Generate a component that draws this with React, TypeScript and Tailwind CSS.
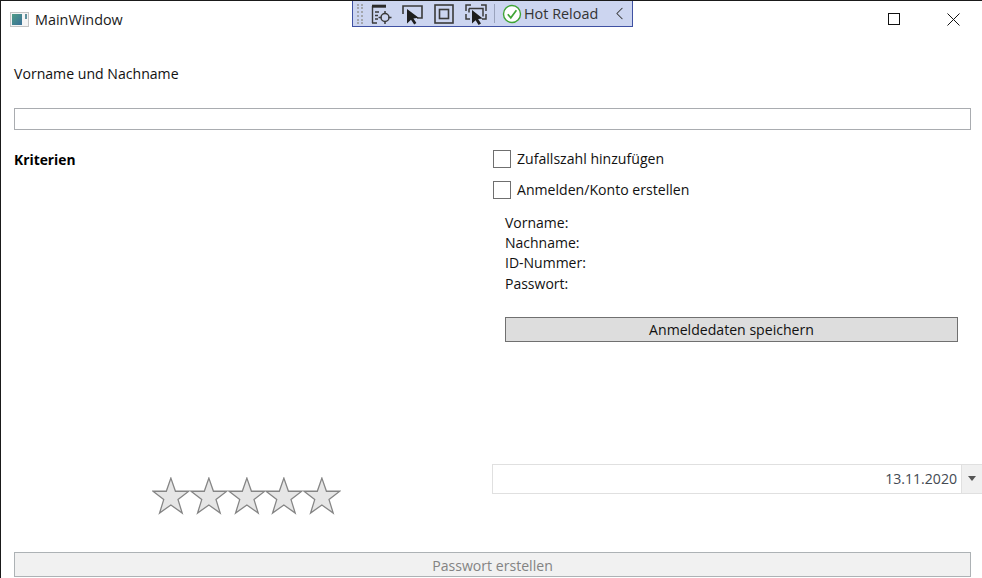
import { ChevronLeft } from "lucide-react";

function Star() {
  return (
    <svg width="37.75" height="38" viewBox="0 0 38 38" className="shrink-0">
      <polygon
        points="19,1 23.6,14.2 37,14.2 26.2,22.6 30.4,36.2 19,28 7.6,36.2 11.8,22.6 1,14.2 14.4,14.2"
        fill="#e6e6e6"
        stroke="#858585"
        strokeWidth="1.3"
      />
    </svg>
  );
}

function Check({ label }: { label: string }) {
  return (
    <div className="flex items-center gap-[6px] h-[18px]">
      <div className="w-[18px] h-[18px] border border-[#6f6f6f] bg-white" />
      <span>{label}</span>
    </div>
  );
}

const cursor = "M0 0l0 13.5 3.6-3.2 3 4.7 2.4-1.5-2.9-4.5 4.6-.5z";

function HotReloadBar() {
  return (
    <div className="absolute left-[351px] -top-px h-[27px] w-[281px] bg-[#ccd5f0] border border-[#3f51a3] flex items-center text-[#222]">
      <div className="w-[6px] h-[20px] ml-[4px] border-x-2 border-dotted border-[#a3a6ad]" />
      {/* live visual tree */}
      <svg width="22" height="22" viewBox="0 0 22 22" className="ml-[7px]" fill="none" stroke="#3a3a3a" strokeWidth="1.4">
        <path d="M2.5 20V3M2 20h5" />
        <path d="M2 3.2h14" stroke="#2b2b2b" strokeWidth="3" />
        <path d="M5 9h4M5 12.5h3M5 16h3" />
        <circle cx="15" cy="14.5" r="4" strokeWidth="1.5" />
        <path d="M15 8v3M15 18v3M8.5 14.5h3M18.5 14.5h3" strokeWidth="1.5" />
      </svg>
      {/* select element */}
      <svg width="22" height="22" viewBox="0 0 22 22" className="ml-[9px]" fill="none" stroke="#3a3a3a" strokeWidth="1.6">
        <path d="M2 11V3h19v12h-5" />
        <path d="M6 6l0 14.5 4-3.8 3.2 4.8 2.2-1.4-3-4.7 5.3-.6z" fill="#1e1e1e" stroke="none" />
      </svg>
      {/* layout adorners */}
      <svg width="22" height="22" viewBox="0 0 22 22" className="ml-[10px]" fill="none" stroke="#3a3a3a" strokeWidth="1.6">
        <rect x="2" y="2" width="18" height="18" />
        <rect x="6.5" y="6.5" width="9" height="9" />
      </svg>
      {/* track focus */}
      <svg width="24" height="22" viewBox="0 0 24 22" className="ml-[9px]" fill="none" stroke="#3a3a3a" strokeWidth="1.5">
        <path d="M2 8V2h5M17 2h5v6M2 11v5h4M22 11v5h-4M5 5.5h14v8M5 5.5v4" />
        <path d={cursor} transform="translate(8 7)" fill="#1e1e1e" stroke="none" />
      </svg>
      <div className="w-px h-[19px] bg-[#9aa3bd] ml-[6px]" />
      <svg width="20" height="20" viewBox="0 0 20 20" className="ml-[7px]" fill="none">
        <circle cx="10" cy="10" r="8.5" fill="#fff" stroke="#3fa535" strokeWidth="1.4" />
        <path d="M5.8 10.2l3 3.6 5.6-7.6" stroke="#3fa535" strokeWidth="1.7" />
      </svg>
      <span className="ml-[2px] text-[14.4px] text-[#333]">Hot Reload</span>
      <ChevronLeft size={21} strokeWidth={1.2} className="ml-[11px] text-[#333]" />
    </div>
  );
}

export default function App() {
  return (
    <div
      className="relative w-[982px] h-[578px] overflow-hidden bg-white border-t border-l border-[#1a1a1a] text-[14.1px] leading-[20px] text-[#111]"
      style={{ fontFamily: '"Open Sans", "Noto Sans", sans-serif' }}
    >
      {/* title bar */}
      <div className="h-[37px] flex items-center">
        <div className="ml-[9px] w-[19px] h-[15px] border border-[#c4c4c4] bg-[#f4f4f4] flex p-px">
          <div className="w-[10px] h-full bg-gradient-to-br from-[#4f9c86] to-[#3a6f96]" />
          <div className="w-[2px] h-[5px] ml-[3px] bg-[#5f8f9c]" />
        </div>
        <span className="ml-[6px] text-[14.4px] text-[#1a1a1a]">MainWindow</span>
        <div className="ml-auto flex items-center pr-[22px] gap-[46px]">
          <svg width="13" height="13" viewBox="0 0 13 13" fill="none" stroke="#111" strokeWidth="1">
            <rect x="0.5" y="0.5" width="11" height="11" />
          </svg>
          <svg width="13" height="13" viewBox="0 0 13 13" fill="none" stroke="#111" strokeWidth="1">
            <path d="M0.5 0.5l12 12M12.5 0.5l-12 12" />
          </svg>
        </div>
      </div>

      <HotReloadBar />

      <div className="pl-[13px] pr-[11px]">
        <div className="pt-[26px]">Vorname und Nachname</div>
        <div className="mt-[24px] h-[22px] border border-[#a9acb0] bg-white" />

        <div className="flex mt-[20px] h-[402px]">
          {/* left column */}
          <div className="w-[478px] flex flex-col">
            <div className="font-bold text-[#000] text-[13.8px]">Kriterien</div>
            <div className="mt-[307px] ml-[138px] flex">
              <Star />
              <Star />
              <Star />
              <Star />
              <Star />
            </div>
          </div>

          {/* right column */}
          <div className="flex-1 -mr-[11px] flex flex-col">
            <div className="ml-[1px]">
              <Check label="Zufallszahl hinzufügen" />
            </div>
            <div className="ml-[1px] mt-[13px]">
              <Check label="Anmelden/Konto erstellen" />
            </div>
            <div className="ml-[13px] mt-[14px] leading-[20.2px] text-[14px]">
              <div>Vorname:</div>
              <div>Nachname:</div>
              <div>ID-Nummer:</div>
              <div>Passwort:</div>
            </div>
            <button className="ml-[13px] mr-[24px] mt-[23px] h-[25px] bg-[#dddddd] border border-[#707070] text-center leading-[23px]">
              Anmeldedaten speichern
            </button>
            <div className="mt-[122px] h-[30px] border-y border-l border-[#e0e0e0] flex items-center justify-end">
              <span className="text-[#444a52] mr-[4px]">13.11.2020</span>
              <div className="w-[21px] h-full bg-[#f0f0f0] border-l border-[#e0e0e0] flex items-center justify-center">
                <div className="w-0 h-0 border-x-[4.5px] border-x-transparent border-t-[5px] border-t-[#555]" />
              </div>
            </div>
          </div>
        </div>

        <button className="block w-full h-[25px] bg-[#f1f1f1] border border-[#adb2b5] text-center text-[#838383] leading-[25px]">
          Passwort erstellen
        </button>
      </div>
    </div>
  );
}
